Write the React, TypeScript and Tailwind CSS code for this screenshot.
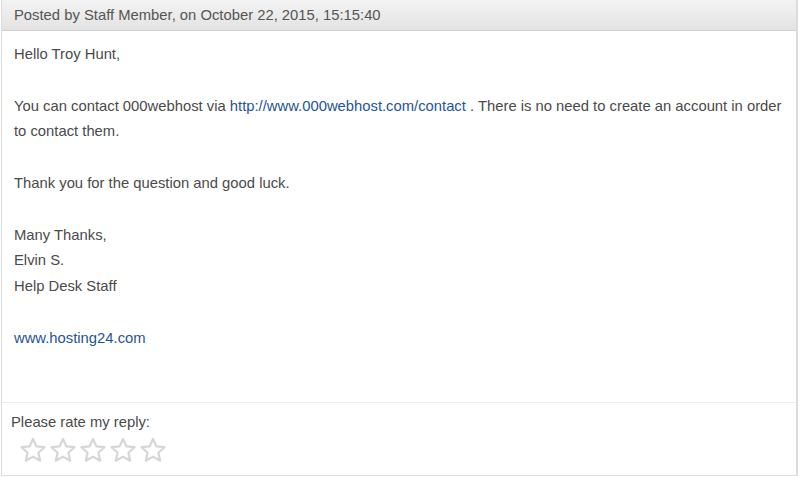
const Star = () => (
  <svg width="28" height="27" viewBox="0 0 28 27" className="blur-[0.5px]">
    <path
      d="M14 2 L17.4 9.4 L25.5 10.2 L19.4 15.7 L21.2 23.8 L14 19.6 L6.8 23.8 L8.6 15.7 L2.5 10.2 L10.6 9.4 Z"
      fill="none"
      stroke="#d6d6d6"
      strokeWidth="2.2"
      strokeLinejoin="round"
    />
  </svg>
);

export default function App() {
  return (
    <div className="w-[800px] h-[477px] bg-white font-['Liberation_Sans',Arial,sans-serif] text-[14.8px] text-[#4a4a4a]">
      <div className="ml-px w-[797px] h-[476px] border border-[#dcdcdc] border-r-2 border-t-0 flex flex-col">
        <div className="h-[31px] flex items-center px-[12px] bg-gradient-to-b from-[#f3f3f3] to-[#e3e3e3] border-b border-[#d0d0d0] text-[#555]">
          Posted by Staff Member, on October 22, 2015, 15:15:40
        </div>
        <div className="px-[12px] pt-[11px] leading-[25.8px] flex-1">
          <p>Hello Troy Hunt,</p>
          <p className="mt-[25.8px]">
            You can contact 000webhost via{" "}
            <a className="text-[#1f5593]">http://www.000webhost.com/contact</a> . There is no need to create an account in order to contact them.
          </p>
          <p className="mt-[25.8px]">Thank you for the question and good luck.</p>
          <p className="mt-[25.8px]">
            Many Thanks,
            <br />
            Elvin S.
            <br />
            Help Desk Staff
          </p>
          <p className="mt-[25.8px]">
            <a className="text-[#1f5593]">www.hosting24.com</a>
          </p>
        </div>
        <div className="h-[73px] border-t border-[#ebebf3] px-[9px] pt-[10px]">
          <div className="leading-[18px]">Please rate my reply:</div>
          <div className="flex gap-[2px] ml-[8px] mt-[6px]">
            <Star />
            <Star />
            <Star />
            <Star />
            <Star />
          </div>
        </div>
      </div>
    </div>
  );
}
